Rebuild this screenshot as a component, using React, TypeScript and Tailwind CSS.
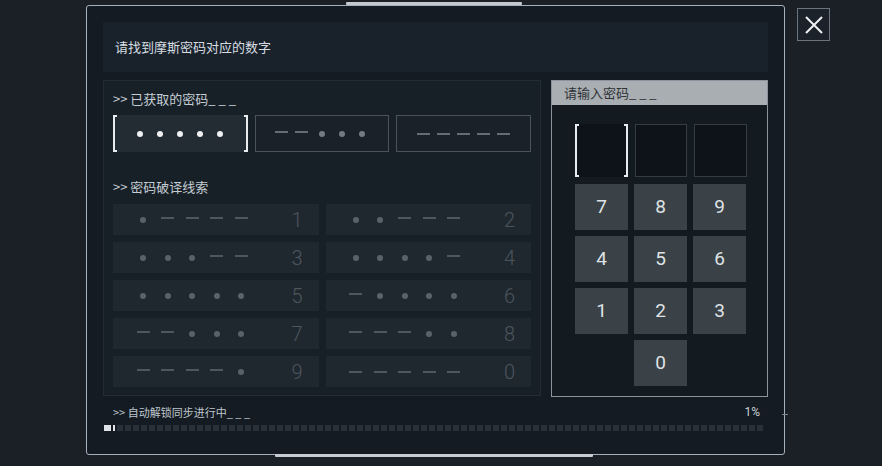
import React from "react";

const CJK = "font-['Noto_Sans_CJK_SC','Noto_Sans',sans-serif]";

type Sym = "." | "-";

const clues: { code: string; n: string }[] = [
  { code: ".----", n: "1" },
  { code: "..---", n: "2" },
  { code: "...--", n: "3" },
  { code: "....-", n: "4" },
  { code: ".....", n: "5" },
  { code: "-....", n: "6" },
  { code: "--...", n: "7" },
  { code: "---..", n: "8" },
  { code: "----.", n: "9" },
  { code: "-----", n: "0" },
];

function Mark({ s, dot, dash }: { s: string; dot: string; dash: string }) {
  return s === "." ? (
    <span className={`block w-[6px] h-[6px] rounded-full ${dot}`} />
  ) : (
    <span className={`block w-[13px] h-[2px] ${dash}`} />
  );
}

function Brackets() {
  return (
    <>
      <span className="absolute left-0 top-0 bottom-0 w-[4px] border-l-2 border-t-2 border-b-2 border-[#e8ecef]" />
      <span className="absolute right-0 top-0 bottom-0 w-[4px] border-r-2 border-t-2 border-b-2 border-[#e8ecef]" />
    </>
  );
}

function CodeBox({ code, active }: { code: string; active?: boolean }) {
  return (
    <div
      className={`relative h-[37px] flex items-center justify-center ${
        active ? "bg-[#232b33]" : "bg-[#1a2128] border border-[#4a535c]"
      }`}
    >
      {active && <Brackets />}
      <div className="flex">
        {code.split("").map((c, i) => (
          <span key={i} className="w-[20px] flex justify-center">
            <Mark
              s={c}
              dot={active ? "bg-[#eef0f2]" : "bg-[#727a82]"}
              dash="bg-[#646c74]"
            />
          </span>
        ))}
      </div>
    </div>
  );
}

function Key({ n }: { n: string }) {
  return (
    <div className="w-[53px] h-[46px] bg-[#3a4147] flex items-center justify-center text-[19px] text-[#dfe3e6] font-['Roboto',sans-serif]">
      {n}
    </div>
  );
}

export default function App() {
  const segs = Array.from({ length: 81 });
  return (
    <div className={`w-[882px] h-[466px] bg-[#1b2027] overflow-hidden flex items-start gap-[12px] pl-[86px] pt-[5px] ${CJK}`}>
      {/* main frame */}
      <div className="relative w-[699px] h-[450px] border-[1.5px] border-[#a7b1bd] rounded-[3px] bg-[#141b22] px-[16px] pt-[16px] flex flex-col">
        <span className="absolute top-[-4px] left-[259px] w-[176px] h-[3px] bg-[#c3c9cf] rounded-[1px]" />
        <span className="absolute bottom-[-3px] left-[188px] w-[318px] h-[3px] bg-[#c6ccd2] rounded-[1px]" />
        <span className="absolute right-[-4px] top-[408px] w-[6px] h-[1px] bg-[#7d8791]" />

        {/* header */}
        <div className="h-[50px] bg-[#19222a] flex items-center pl-[12px] text-[13px] text-[#d7dde2]">
          请找到摩斯密码对应的数字
        </div>

        <div className="mt-[8px] flex gap-[10px]">
          {/* left section */}
          <div className="w-[438px] h-[316px] bg-[#172027] border border-[#222c35] px-[9px] pt-[10px]">
            <div className="text-[13px] text-[#c5cdd4] leading-[16px]">&gt;&gt; 已获取的密码_ _ _</div>
            <div className="mt-[8px] grid grid-cols-3 gap-[7px]">
              <CodeBox code="....." active />
              <CodeBox code="--..." />
              <CodeBox code="-----" />
            </div>
            <div className="mt-[27px] text-[13px] text-[#c5cdd4] leading-[16px]">&gt;&gt; 密码破译线索</div>
            <div className="mt-[9px] grid grid-cols-2 gap-x-[7px] gap-y-[7px]">
              {clues.map((c) => (
                <div key={c.n} className="h-[31px] bg-[#20282f] flex items-center pl-[18px] pr-[16px]">
                  <div className="flex">
                    {c.code.split("").map((s, i) => (
                      <span key={i} className="w-[24.5px] flex justify-center">
                        <Mark s={s as Sym} dot="bg-[#59626a]" dash="bg-[#4e575f]" />
                      </span>
                    ))}
                  </div>
                  <span className="ml-auto text-[20px] font-light text-[#4c555d] font-['Roboto',sans-serif] leading-none">
                    {c.n}
                  </span>
                </div>
              ))}
            </div>
          </div>

          {/* right section */}
          <div className="w-[217px] h-[317px] border border-[#8b949c] bg-[#131a20] flex flex-col">
            <div className="h-[24px] bg-[#a9aeb2] flex items-center pl-[12px] text-[13px] text-[#2f3337]">
              请输入密码_ _ _
            </div>
            <div className="flex flex-col items-start pl-[23px] pt-[19px]">
              <div className="flex gap-[7px]">
                <div className="relative w-[53px] h-[53px] bg-[#0e1319]">
                  <Brackets />
                </div>
                <div className="w-[52px] h-[53px] bg-[#0e1319] border border-[#343d46]" />
                <div className="w-[53px] h-[53px] bg-[#0e1319] border border-[#343d46]" />
              </div>
              <div className="mt-[7px] grid grid-cols-3 gap-x-[6px] gap-y-[6px]">
                {["7", "8", "9", "4", "5", "6", "1", "2", "3"].map((n) => (
                  <Key key={n} n={n} />
                ))}
                <div />
                <Key n="0" />
                <div />
              </div>
            </div>
          </div>
        </div>

        {/* footer */}
        <div className="mt-[7px] flex items-end justify-between pl-[10px] pr-[8px]">
          <span className="text-[11px] text-[#bfc7ce] leading-[16px]">&gt;&gt; 自动解锁同步进行中_ _ _</span>
          <span className="text-[12px] text-[#c9d0d6] leading-[16px] font-['Roboto',sans-serif]">1%</span>
        </div>
        <div className="mt-[5px] flex gap-[2px] h-[6px] pl-[1px]">
          <span className="w-[7px] bg-[#dfe3e7]" />
          <span className="w-[2px] bg-[#dfe3e7]" />
          {segs.map((_, i) => (
            <span key={i} className="w-[6px] bg-[#283139]" />
          ))}
        </div>
      </div>

      {/* close */}
      <div className="mt-[3px] w-[33px] h-[33px] border border-[#6b747c] bg-[#1c2229] flex items-center justify-center">
        <svg width="20" height="20" viewBox="0 0 20 20">
          <path d="M2 2 L18 18 M18 2 L2 18" stroke="#eef1f3" strokeWidth="2" />
        </svg>
      </div>
    </div>
  );
}
